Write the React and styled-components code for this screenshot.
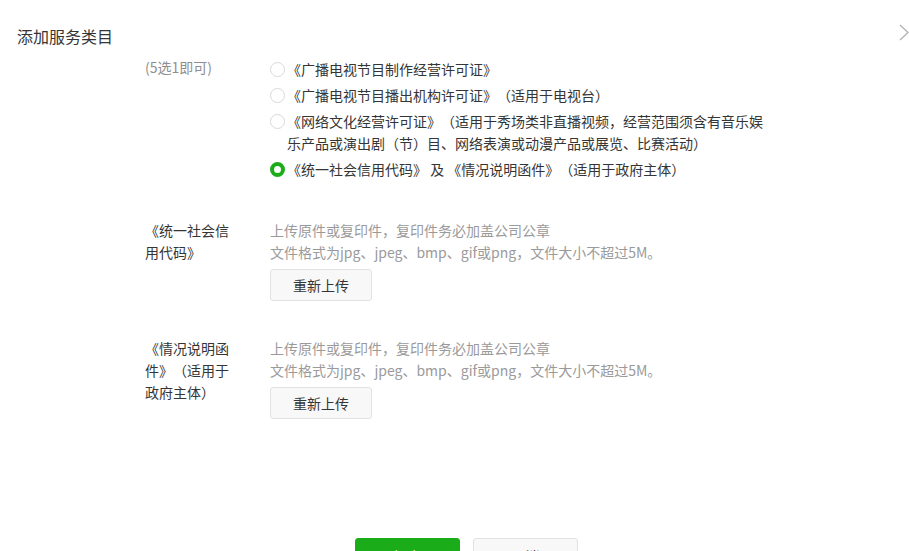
import React from "react";
import styled, { createGlobalStyle } from "styled-components";

const Global = createGlobalStyle`
  html, body { margin: 0; padding: 0; background: #fff; }
  body {
    font-family: "Noto Sans CJK SC", "Noto Sans", "Liberation Sans", sans-serif;
    color: #353535;
    font-size: 14px;
    text-spacing-trim: space-all;
  }
  * { box-sizing: border-box; }
`;

const Dialog = styled.div`
  width: 909px;
  height: 551px;
  display: flex;
  flex-direction: column;
  overflow: hidden;
  background: #fff;
`;

const Header = styled.div`
  position: relative;
  z-index: 1;
  flex: 0 0 60px;
  display: flex;
  justify-content: space-between;
  align-items: flex-start;
  padding: 25px 0 0 17px;
  background: #fff;
`;

const Title = styled.div`
  font-size: 16px;
  line-height: 22px;
  color: #353535;
`;

const Arrow = styled.div`
  width: 10px;
  height: 17px;
  margin-top: -1px;
  display: flex;
`;

const Body = styled.div`
  flex: 1;
  overflow: hidden;
`;

const Scrolled = styled.div`
  margin-top: -24px;
  padding-left: 145px;
  display: flex;
  flex-direction: column;
`;

const Row = styled.div`
  display: flex;
  margin-top: ${(p) => p.$top || 0}px;
`;

const Label = styled.div`
  width: 90px;
  margin-right: 35px;
  line-height: 22px;
  color: #353535;
`;

const Note = styled.span`
  display: block;
  line-height: 18px;
  color: #8f8f8f;
`;

const Field = styled.div`
  display: flex;
  flex-direction: column;
`;

const OptionList = styled.div`
  display: flex;
  flex-direction: column;
  gap: 4px;
  padding-top: 22px;
`;

const Option = styled.label`
  display: flex;
  align-items: flex-start;
  line-height: 22px;
`;

const Radio = styled.span`
  flex: 0 0 15px;
  width: 15px;
  height: 15px;
  margin-top: 4px;
  margin-right: 2px;
  border-radius: 50%;
  border: ${(p) => (p.$checked ? "4px solid #1aad19" : "1px solid #d9d9d9")};
  background: #fff;
`;

const OptionText = styled.span`
  width: 484px;
`;

const Hint = styled.div`
  line-height: 22px;
  color: #9a9a9a;
  white-space: nowrap;
`;

const UploadButton = styled.button`
  margin-top: 6px;
  width: 102px;
  height: 32px;
  border: 1px solid #e2e2e2;
  border-radius: 3px;
  background: #f8f8f8;
  color: #353535;
  font-family: inherit;
  font-size: 14px;
  padding: 0;
`;

const Footer = styled.div`
  display: flex;
  justify-content: center;
  gap: 13px;
  padding-left: 24px;
  margin-top: 119px;
`;

const FootButton = styled.button`
  width: 105px;
  height: 36px;
  border-radius: 3px;
  font-family: inherit;
  font-size: 14px;
  padding: 0;
  border: 1px solid ${(p) => (p.$primary ? "#1aad19" : "#e2e2e2")};
  background: ${(p) => (p.$primary ? "#1aad19" : "#f8f8f8")};
  color: ${(p) => (p.$primary ? "#fff" : "#353535")};
`;

const options = [
  "《广播电视节目制作经营许可证》",
  "《广播电视节目播出机构许可证》（适用于电视台）",
  "《网络文化经营许可证》（适用于秀场类非直播视频，经营范围须含有音乐娱乐产品或演出剧（节）目、网络表演或动漫产品或展览、比赛活动）",
  "《统一社会信用代码》 及 《情况说明函件》（适用于政府主体）",
];

const hints = [
  "上传原件或复印件，复印件务必加盖公司公章",
  "文件格式为jpg、jpeg、bmp、gif或png，文件大小不超过5M。",
];

export default function App() {
  return (
    <>
      <Global />
      <Dialog>
        <Header>
          <Title>添加服务类目</Title>
          <Arrow>
            <svg width="10" height="17" viewBox="0 0 10 17">
              <path d="M1 1 L9 8.5 L1 16" fill="none" stroke="#b2b2b2" strokeWidth="1.3" />
            </svg>
          </Arrow>
        </Header>
        <Body>
          <Scrolled>
            <Row>
              <Label>
                资质证明
                <Note>(5选1即可)</Note>
              </Label>
              <OptionList>
                {options.map((t, i) => (
                  <Option key={i}>
                    <Radio $checked={i === 3} />
                    <OptionText>{t}</OptionText>
                  </Option>
                ))}
              </OptionList>
            </Row>
            <Row $top={39}>
              <Label>《统一社会信用代码》</Label>
              <Field>
                {hints.map((h) => (
                  <Hint key={h}>{h}</Hint>
                ))}
                <UploadButton>重新上传</UploadButton>
              </Field>
            </Row>
            <Row $top={36}>
              <Label>《情况说明函件》（适用于政府主体）</Label>
              <Field>
                {hints.map((h) => (
                  <Hint key={h}>{h}</Hint>
                ))}
                <UploadButton>重新上传</UploadButton>
              </Field>
            </Row>
          </Scrolled>
          <Footer>
            <FootButton $primary>提交</FootButton>
            <FootButton>取消</FootButton>
          </Footer>
        </Body>
      </Dialog>
    </>
  );
}
